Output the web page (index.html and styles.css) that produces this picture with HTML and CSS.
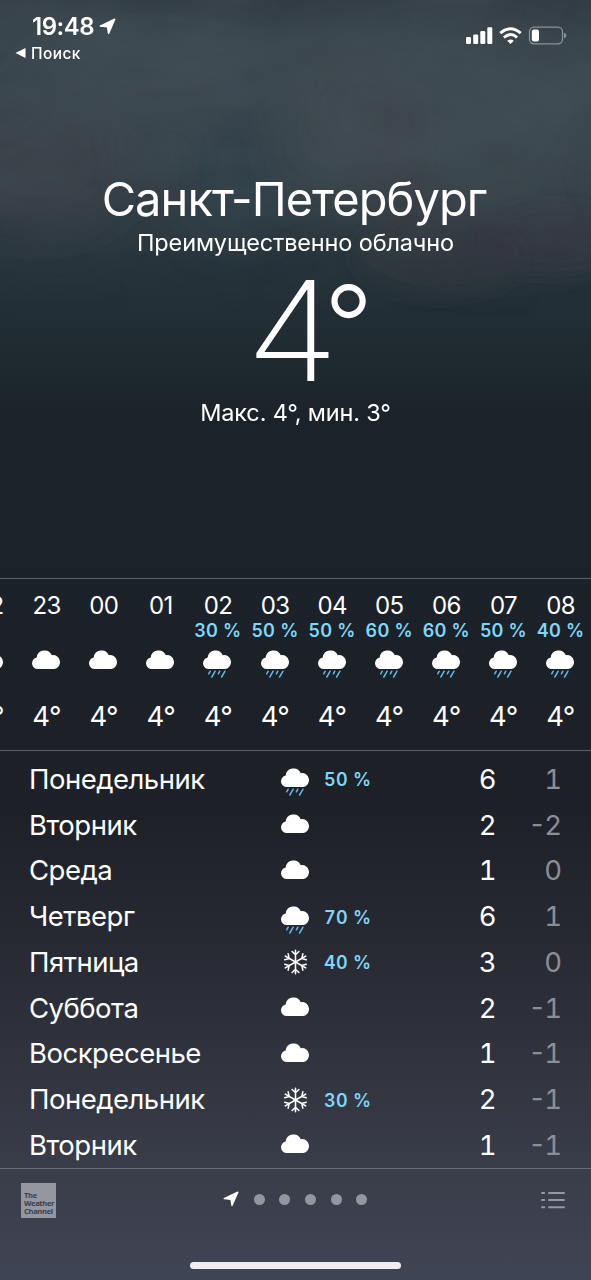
FILE: index.html
```html
<!DOCTYPE html>
<html lang="ru">
<head>
<meta charset="utf-8">
<title>Погода</title>
<link rel="stylesheet" href="styles.css">
</head>
<body>
<svg class="defs" width="0" height="0" aria-hidden="true">
  <symbol id="cloud" viewBox="0 0 29 30"><path fill="#fff" d="M5.700 20A5.750 5.750 0 0 1 4.700 8.600A7.900 7.900 0 0 1 19.800 6.200A6.900 6.900 0 1 1 22.200 20Z"/></symbol>
  <symbol id="rain" viewBox="0 0 29 30"><use href="#cloud" width="29" height="30"/><path stroke="#62b8e6" stroke-width="1.500" stroke-linecap="round" d="M7.200 22.200L5.700 24.800M12.200 22.200L8.800 28M16.800 22.200L15.400 24.800M22 22.200L18.600 28"/></symbol>
  <symbol id="snow" viewBox="-15 -15 30 30"><g fill="none" stroke="#fff" stroke-width="1.600" stroke-linecap="round"><path id="arm" d="M0 0V-12.200M-3.500 -10.800L0 -7.500L3.500 -10.800"/><use href="#arm" transform="rotate(60)"/><use href="#arm" transform="rotate(120)"/><use href="#arm" transform="rotate(180)"/><use href="#arm" transform="rotate(240)"/><use href="#arm" transform="rotate(300)"/></g></symbol>
  <symbol id="arrow" viewBox="0 0 16 16"><path fill="#fff" stroke="#fff" stroke-width="1.400" stroke-linejoin="round" d="M14.800 1.200L9 14.500L8 8.200L1.200 7.600Z"/></symbol>
</svg>
<main class="screen">
  <svg class="sky" viewBox="0 0 591 578" aria-hidden="true">
    <defs>
      <filter id="soft" x="-50%" y="-50%" width="200%" height="200%"><feGaussianBlur stdDeviation="22"/></filter>
      <filter id="edge" x="-50%" y="-50%" width="200%" height="200%"><feGaussianBlur stdDeviation="9"/></filter>
      <filter id="haze" x="0" y="0" width="100%" height="100%" color-interpolation-filters="sRGB"><feTurbulence type="fractalNoise" baseFrequency="0.008 0.012" numOctaves="4" seed="8"/><feColorMatrix values="0 0 0 0 .30  0 0 0 0 .36  0 0 0 0 .39  1.500 0 0 0 -.45"/></filter>
      <linearGradient id="fade" x2="0" y2="1"><stop stop-color="#fff"/><stop offset=".4" stop-color="#fff"/><stop offset=".8" stop-color="#000"/></linearGradient>
      <mask id="fadeMask"><rect width="591" height="400" fill="url(#fade)"/></mask>
    </defs>
    <g filter="url(#soft)">
      <ellipse cx="40" cy="170" rx="90" ry="60" fill="#3c4048" opacity=".6"/>
      <ellipse cx="150" cy="85" rx="130" ry="40" fill="#424c53" opacity=".45"/>
      <ellipse cx="245" cy="180" rx="60" ry="60" fill="#2d3c46" opacity=".5"/>
      <ellipse cx="330" cy="120" rx="60" ry="90" fill="#434d53" opacity=".5"/>
      <ellipse cx="460" cy="110" rx="150" ry="80" fill="#414b51" opacity=".6"/>
      <ellipse cx="390" cy="150" rx="30" ry="80" fill="#3f434c" opacity=".7"/>
      <ellipse cx="500" cy="215" rx="130" ry="50" fill="#383e46" opacity=".7"/>
    </g>
    <g filter="url(#edge)">
      <ellipse cx="440" cy="255" rx="85" ry="42" fill="#31363e" opacity=".5"/>
      <ellipse cx="555" cy="240" rx="80" ry="34" fill="#31363e" opacity=".45"/>
    </g>
    <rect width="591" height="400" filter="url(#haze)" mask="url(#fadeMask)" opacity=".4"/>
  </svg>

  <header class="status">
    <div class="status-left">
      <div class="clock"><span>19:48</span><svg class="clock-arrow"><use href="#arrow"/></svg></div>
      <div class="back"><svg class="back-icon" viewBox="0 0 10 10"><path fill="#fff" d="M0 5L10 0V10Z"/></svg><span>Поиск</span></div>
    </div>
    <svg class="indicators" width="102" height="20" viewBox="0 0 102 20">
      <g fill="#fff">
        <rect x="1" y="11" width="5" height="7" rx="1.200"/><rect x="8.200" y="8.500" width="5" height="9.500" rx="1.200"/><rect x="15.300" y="5" width="5" height="13" rx="1.200"/><rect x="22.300" y="1.200" width="5" height="16.800" rx="1.200"/>
        <path d="M45.500 18L42.200 14.800Q45.500 12.200 48.800 14.800Z"/>
      </g>
      <path fill="none" stroke="#fff" stroke-width="2.900" d="M35.300 7.200Q45.500 -1.800 55.700 7.200M38.900 11.500Q45.500 5.700 52.100 11.500"/>
      <rect x="64.500" y="1.200" width="33" height="16.600" rx="4.500" fill="none" stroke="#8a9197" stroke-width="1.300"/>
      <rect x="66.800" y="3.500" width="7.200" height="12" rx="2" fill="#fff"/>
      <path d="M99 6.800Q101.400 7.500 101.400 9.600T99 12.400Z" fill="#8a9197"/>
    </svg>
  </header>

  <section class="current">
    <h1 class="city">Санкт-Петербург</h1>
    <p class="condition">Преимущественно облачно</p>
    <div class="temp"><span class="value">4</span><span class="degree">°</span></div>
    <p class="range">Макс. 4°, мин. 3°</p>
  </section>

  <section class="hours">
    <div class="hour"><span class="time">22</span><span class="chance"></span><svg class="icon"><use href="#cloud"/></svg><span class="deg">4°</span></div>
    <div class="hour"><span class="time">23</span><span class="chance"></span><svg class="icon"><use href="#cloud"/></svg><span class="deg">4°</span></div>
    <div class="hour"><span class="time">00</span><span class="chance"></span><svg class="icon"><use href="#cloud"/></svg><span class="deg">4°</span></div>
    <div class="hour"><span class="time">01</span><span class="chance"></span><svg class="icon"><use href="#cloud"/></svg><span class="deg">4°</span></div>
    <div class="hour"><span class="time">02</span><span class="chance">30 %</span><svg class="icon"><use href="#rain"/></svg><span class="deg">4°</span></div>
    <div class="hour"><span class="time">03</span><span class="chance">50 %</span><svg class="icon"><use href="#rain"/></svg><span class="deg">4°</span></div>
    <div class="hour"><span class="time">04</span><span class="chance">50 %</span><svg class="icon"><use href="#rain"/></svg><span class="deg">4°</span></div>
    <div class="hour"><span class="time">05</span><span class="chance">60 %</span><svg class="icon"><use href="#rain"/></svg><span class="deg">4°</span></div>
    <div class="hour"><span class="time">06</span><span class="chance">60 %</span><svg class="icon"><use href="#rain"/></svg><span class="deg">4°</span></div>
    <div class="hour"><span class="time">07</span><span class="chance">50 %</span><svg class="icon"><use href="#rain"/></svg><span class="deg">4°</span></div>
    <div class="hour"><span class="time">08</span><span class="chance">40 %</span><svg class="icon"><use href="#rain"/></svg><span class="deg">4°</span></div>
  </section>

  <section class="days">
    <div class="day"><span>Понедельник</span><svg class="icon"><use href="#rain"/></svg><span class="chance">50 %</span><span class="high">6</span><span class="low">1</span></div>
    <div class="day"><span>Вторник</span><svg class="icon"><use href="#cloud"/></svg><span class="chance"></span><span class="high">2</span><span class="low">-2</span></div>
    <div class="day"><span>Среда</span><svg class="icon"><use href="#cloud"/></svg><span class="chance"></span><span class="high">1</span><span class="low">0</span></div>
    <div class="day"><span>Четверг</span><svg class="icon"><use href="#rain"/></svg><span class="chance">70 %</span><span class="high">6</span><span class="low">1</span></div>
    <div class="day"><span>Пятница</span><svg class="icon snow"><use href="#snow"/></svg><span class="chance">40 %</span><span class="high">3</span><span class="low">0</span></div>
    <div class="day"><span>Суббота</span><svg class="icon"><use href="#cloud"/></svg><span class="chance"></span><span class="high">2</span><span class="low">-1</span></div>
    <div class="day"><span>Воскресенье</span><svg class="icon"><use href="#cloud"/></svg><span class="chance"></span><span class="high">1</span><span class="low">-1</span></div>
    <div class="day"><span>Понедельник</span><svg class="icon snow"><use href="#snow"/></svg><span class="chance">30 %</span><span class="high">2</span><span class="low">-1</span></div>
    <div class="day"><span>Вторник</span><svg class="icon"><use href="#cloud"/></svg><span class="chance"></span><span class="high">1</span><span class="low">-1</span></div>
  </section>

  <footer class="footer">
    <div class="toolbar">
      <div class="brand">The<br>Weather<br>Channel</div>
      <div class="pages"><svg class="page-arrow"><use href="#arrow"/></svg><i class="dot"></i><i class="dot"></i><i class="dot"></i><i class="dot"></i><i class="dot"></i></div>
      <svg class="list" width="24" height="18" viewBox="0 0 24 18"><path stroke="#9496a0" stroke-width="2" stroke-linecap="round" d="M1 2H3.200M8 2H23M1 9H3.200M8 9H23M1 16.200H3.200M8 16.200H23"/></svg>
    </div>
    <div class="home"></div>
  </footer>
</main>
</body>
</html>
```
FILE: styles.css
```css
* { box-sizing: border-box; }
body { margin: 0; background: #1b2229; }
h1, p { margin: 0; font-weight: 400; }
.defs { position: absolute; }
.screen {
  position: relative;
  width: 591px;
  height: 1280px;
  overflow: hidden;
  display: flex;
  flex-direction: column;
  color: #fff;
  font-family: Inter, "Liberation Sans", sans-serif;
  background: linear-gradient(#343d45 0, #39444b 40px, #39444b 150px, #303b42 210px, #27333a 270px, #202b32 340px, #1b232a 420px, #1b2229 560px, #1d2027 750px, #1f2128 820px, #282b34 960px, #393d49 1167px, #404555 1280px);
}
.sky { position: absolute; left: 0; top: 0; width: 591px; height: 578px; }
.status {
  position: relative;
  height: 70px;
  padding: 12px 24px 0 15px;
  display: flex;
  justify-content: space-between;
}
.clock { display: flex; align-items: center; gap: 5px; height: 28px; padding-left: 17px; font-size: 24px; font-weight: 600; letter-spacing: -.5px; }
.clock-arrow { width: 17px; height: 17px; }
.back { display: flex; align-items: center; gap: 5px; height: 26px; font-size: 15.500px; font-weight: 500; letter-spacing: .4px; }
.back-icon { width: 11px; height: 10px; }
.indicators { margin-top: 14px; }
.current { position: relative; height: 508px; padding-top: 99px; text-align: center; }
.city { height: 60px; padding-right: 3px; line-height: 60px; font-size: 47px; letter-spacing: -.95px; }
.condition { height: 28px; line-height: 28px; font-size: 23.500px; letter-spacing: -.15px; }
.temp { display: flex; height: 141px; padding-left: 246px; line-height: 147px; font-size: 139px; font-weight: 200; }
.value { transform: scaleX(1.09); transform-origin: left; }
.degree { margin-left: -7px; line-height: 134px; font-size: 108px; font-weight: 300; }
.range { height: 30px; line-height: 30px; font-size: 23.500px; letter-spacing: -.15px; }
.hours {
  height: 173px;
  padding-top: 12px;
  margin-left: -39px;
  border-top: 1px solid #5d6268;
  border-bottom: 1px solid #5d6268;
  display: grid;
  grid-template-columns: repeat(11, 57.100px);
  width: 640px;
}
.hour { display: flex; flex-direction: column; align-items: center; }
.time { height: 28px; line-height: 29px; font-size: 24px; letter-spacing: -.7px; }
.chance { color: #7fd6f7; font-size: 18px; font-weight: 600; white-space: nowrap; letter-spacing: .3px; }
.hour .chance { height: 22px; line-height: 24px; }
.icon { width: 29px; height: 30px; }
.hour .icon { margin-top: 8px; }
.deg { margin-top: 20px; line-height: 34px; font-size: 27.500px; letter-spacing: -.6px; }
.days { height: 417px; padding: 5px 30px 0 29px; }
.day {
  display: grid;
  grid-template-columns: 251.600px 43.400px 110px 62px 64px;
  align-items: center;
  height: 45.750px;
  font-size: 27.500px;
  letter-spacing: -.5px;
  font-feature-settings: "tnum", "case";
}
.day .chance { padding-top: 2px; letter-spacing: .3px; }
.day .icon { margin-top: 7px; }
.day .snow { margin-top: 1px; }
.high, .low { text-align: right; }
.low { color: #8b8e96; letter-spacing: -2px; }
.footer { height: 112px; border-top: 1px solid #6c6f7a; display: flex; flex-direction: column; align-items: center; justify-content: space-between; padding-bottom: 11px; }
.toolbar { width: 100%; height: 62px; padding: 0 26px 0 21px; display: grid; grid-template-columns: 203px 1fr 24px; align-items: center; }
.brand { width: 35px; height: 35px; padding: 8px 0 0 3px; background: #9496a0; color: #3c3f4b; font: 700 7.600px/8.200px "Open Sans", sans-serif; letter-spacing: -.35px; }
.pages { display: flex; align-items: center; gap: 14.700px; margin: -2px 0 0 -1px; }
.page-arrow { width: 16px; height: 16px; }
.dot { width: 11px; height: 11px; border-radius: 50%; background: #9496a0; }
.home { width: 211px; height: 7px; border-radius: 4px; background: #efeff1; }
```
